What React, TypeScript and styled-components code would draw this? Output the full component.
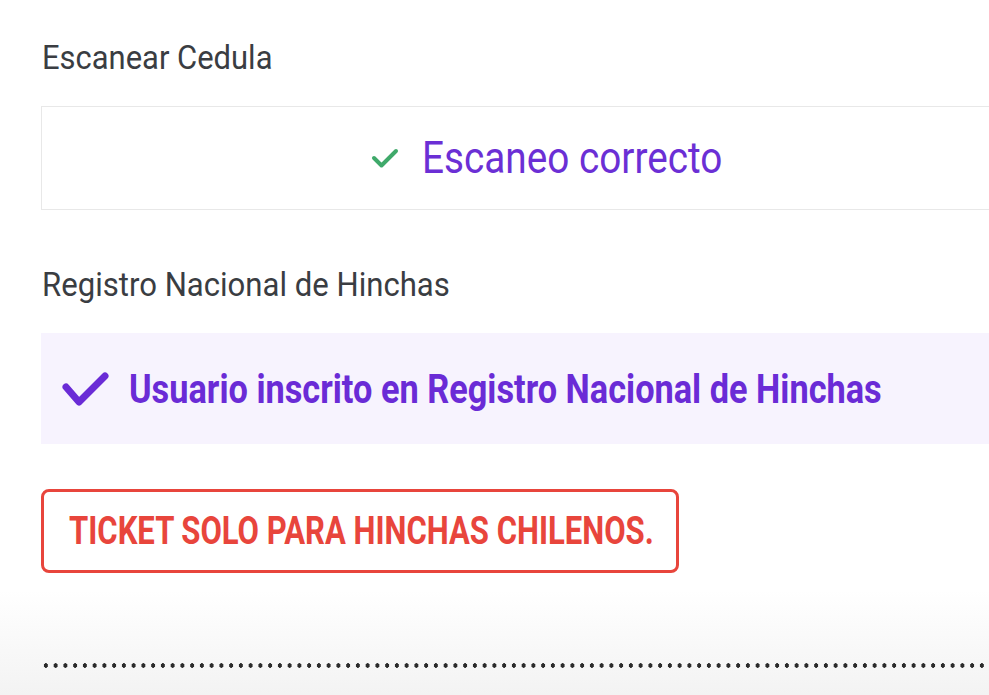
import React from "react";
import styled, { createGlobalStyle } from "styled-components";

const GlobalStyle = createGlobalStyle`
  html, body {
    margin: 0;
    padding: 0;
    overflow: hidden;
  }
  body {
    width: 989px;
    height: 695px;
    background: linear-gradient(to bottom, #ffffff 0px, #ffffff 590px, #f3f3f3 695px);
    font-family: Roboto, "Noto Sans", sans-serif;
  }
`;

const Page = styled.main`
  width: 1012px;
  padding: 37px 0 0 41px;
  display: flex;
  flex-direction: column;
`;

const Section = styled.section<{ $gap: number; $after: number }>`
  display: flex;
  flex-direction: column;
  gap: ${(p) => p.$gap}px;
  margin-bottom: ${(p) => p.$after}px;
`;

const Condensed = styled.span<{ $scale: number }>`
  display: inline-block;
  white-space: nowrap;
  transform: scaleX(${(p) => p.$scale});
  transform-origin: left center;
`;

const Label = styled.h2`
  margin: 0 0 0 1px;
  font-size: 34px;
  line-height: 40px;
  font-weight: 400;
  color: #3a3d42;
`;

const ScanBox = styled.div`
  box-sizing: border-box;
  height: 104px;
  border: 1.5px solid #e8e8e8;
  display: flex;
  align-items: center;
  padding-left: 329px;
  gap: 23px;
`;

const ScanText = styled.span`
  font-size: 44px;
  line-height: 52px;
  color: #6b2fd5;
`;

const RegistryBox = styled.div`
  box-sizing: border-box;
  height: 111px;
  background: #f7f3fe;
  display: flex;
  align-items: center;
  padding-left: 21px;
  gap: 20px;
`;

const RegistryText = styled.span`
  font-size: 41px;
  line-height: 50px;
  font-weight: 700;
  color: #6a2bd6;
`;

const Alert = styled.div`
  box-sizing: border-box;
  align-self: flex-start;
  width: 638px;
  height: 84px;
  border: 3.5px solid #e8453c;
  border-radius: 8px;
  display: flex;
  align-items: center;
  padding-left: 24.5px;
`;

const AlertText = styled.span`
  font-size: 38px;
  line-height: 44px;
  font-weight: 700;
  color: #e8453c;
`;

const Dotted = styled.div`
  margin-top: 90px;
  height: 5px;
  background-image: radial-gradient(ellipse 1.9px 2.3px at center, #2b2b2b 90%, transparent 100%);
  background-size: 9.75px 5px;
  background-repeat: repeat-x;
`;

const GreenCheck = () => (
  <svg width="28" height="22" viewBox="0 0 28 22">
    <path d="M3 11 L10.5 18.5 L25 4" fill="none" stroke="#3fa96a" strokeWidth="4" strokeLinecap="round" strokeLinejoin="round" />
  </svg>
);

const PurpleCheck = () => (
  <svg width="47" height="36" viewBox="0 0 47 36">
    <path d="M4 16 L17 31 L43 5" fill="none" stroke="#6a2bd6" strokeWidth="7" strokeLinecap="round" strokeLinejoin="round" />
  </svg>
);

export default function App() {
  return (
    <>
      <GlobalStyle />
      <Page>
        <Section $gap={29} $after={54}>
          <Label>
            <Condensed $scale={0.91}>Escanear Cedula</Condensed>
          </Label>
          <ScanBox>
            <GreenCheck />
            <ScanText>
              <Condensed $scale={0.88}>Escaneo correcto</Condensed>
            </ScanText>
          </ScanBox>
        </Section>
        <Section $gap={29} $after={45}>
          <Label>
            <Condensed $scale={0.915}>Registro Nacional de Hinchas</Condensed>
          </Label>
          <RegistryBox>
            <PurpleCheck />
            <RegistryText>
              <Condensed $scale={0.837}>Usuario inscrito en Registro Nacional de Hinchas</Condensed>
            </RegistryText>
          </RegistryBox>
        </Section>
        <Alert>
          <AlertText>
            <Condensed $scale={0.817}>TICKET SOLO PARA HINCHAS CHILENOS.</Condensed>
          </AlertText>
        </Alert>
        <Dotted />
      </Page>
    </>
  );
}
